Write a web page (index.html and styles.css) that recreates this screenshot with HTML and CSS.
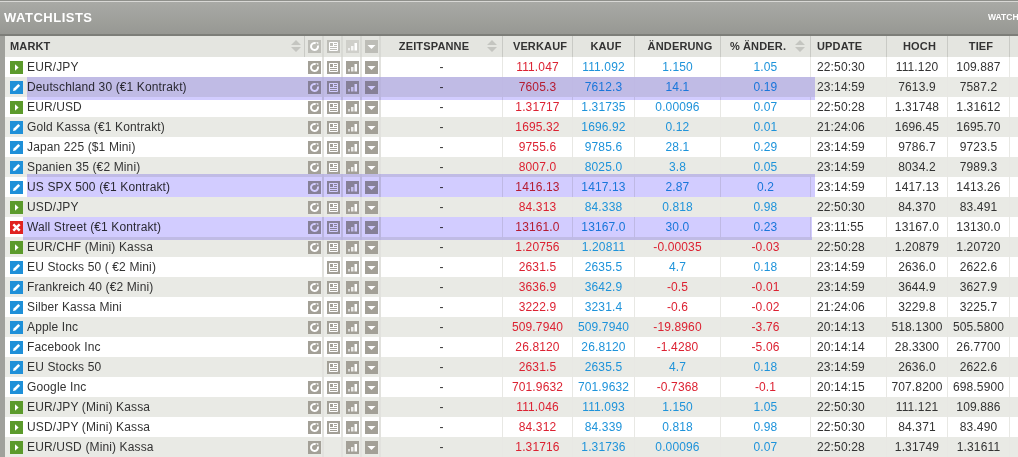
FILE: index.html
```html
<!DOCTYPE html>
<html lang="de">
<head>
<meta charset="utf-8">
<title>Watchlists</title>
<link rel="stylesheet" href="styles.css">
</head>
<body>
<svg class="defs" width="0" height="0" aria-hidden="true">
  <symbol id="i-refresh" viewBox="0 0 13 13"><rect width="13" height="13" fill="currentColor"/><path d="M7.700 3.200A3.500 3.500 0 1 0 9.900 5.600" fill="none" stroke="#fff" stroke-width="2"/><path d="M8 2.200h2.300v2.300z" fill="#fff"/></symbol>
  <symbol id="i-news" viewBox="0 0 13 13"><rect width="13" height="13" fill="currentColor"/><path d="M2.500 2.500h8v8h-8zM2.500 6.500h8M2.500 8.500h8M6.500 2.500v4M7 4.500h3" fill="none" stroke="#fff"/></symbol>
  <symbol id="i-bars" viewBox="0 0 13 13"><rect width="13" height="13" fill="currentColor"/><rect x="2" y="8" width="2" height="2.500" fill="#fff" opacity=".65"/><rect x="5" y="6" width="2.500" height="4.500" fill="#fff" opacity=".8"/><rect x="8.500" y="3" width="2.500" height="7.500" fill="#fff"/></symbol>
  <symbol id="i-menu" viewBox="0 0 13 13"><rect width="13" height="13" fill="currentColor"/><path d="M2.500 5h8l-4 4z" fill="#fff"/></symbol>
  <symbol id="i-play" viewBox="0 0 13 13"><rect width="13" height="13" fill="#5b9a2b"/><path d="M5 3.200v6.600L8.600 6.500z" fill="#fff"/></symbol>
  <symbol id="i-edit" viewBox="0 0 13 13"><rect width="13" height="13" fill="#1f90d8"/><path d="M3 10l.6-2.400 4.700-4.700 1.800 1.800-4.700 4.700z" fill="#fff"/></symbol>
  <symbol id="i-stop" viewBox="0 0 13 13"><rect width="13" height="13" fill="#e0231f"/><path d="M3.300 3.300l6.400 6.400M9.700 3.300l-6.400 6.400" stroke="#fff" stroke-width="2.400"/></symbol>
  <symbol id="i-sort" viewBox="0 0 10 12"><path d="M5 0l5 5H0zM0 7h10l-5 5z" fill="#c4c5c0"/></symbol>
</svg>
<main class="panel">
  <header class="titlebar">
    <h1 class="title">WATCHLISTS</h1>
    <span class="title-tab">WATCH</span>
  </header>
  <div class="board">
    <table class="grid">
      <colgroup>
        <col class="c-market"><col class="c-ic"><col class="c-ic"><col class="c-ic"><col class="c-ic"><col class="c-span"><col class="c-sell"><col class="c-buy"><col class="c-chg"><col class="c-pct"><col class="c-upd"><col class="c-high"><col class="c-low"><col class="c-rest">
      </colgroup>
      <thead>
        <tr>
          <th class="left"><div class="hd">MARKT<svg class="sort"><use href="#i-sort"/></svg></div></th>
          <th class="ic"><svg class="icon"><use href="#i-refresh"/></svg></th>
          <th class="ic"><svg class="icon"><use href="#i-news"/></svg></th>
          <th class="ic"><svg class="icon faint"><use href="#i-bars"/></svg></th>
          <th class="ic"><svg class="icon"><use href="#i-menu"/></svg></th>
          <th><div class="hd center">ZEITSPANNE<svg class="sort"><use href="#i-sort"/></svg></div></th>
          <th class="shift">VERKAUF</th>
          <th class="shift">KAUF</th>
          <th class="shift">ÄNDERUNG</th>
          <th><div class="hd center">% ÄNDER.<svg class="sort"><use href="#i-sort"/></svg></div></th>
          <th class="upd">UPDATE</th>
          <th class="shift">HOCH</th>
          <th class="shift">TIEF</th>
          <th class="rest"></th>
        </tr>
      </thead>
      <tbody>
        <tr><td class="name"><svg class="state"><use href="#i-play"/></svg>EUR/JPY</td><td class="ic"><svg class="icon"><use href="#i-refresh"/></svg></td><td class="ic"><svg class="icon"><use href="#i-news"/></svg></td><td class="ic"><svg class="icon"><use href="#i-bars"/></svg></td><td class="ic"><svg class="icon"><use href="#i-menu"/></svg></td><td>-</td><td class="neg">111.047</td><td class="pos">111.092</td><td class="pos">1.150</td><td class="pos">1.05</td><td class="upd">22:50:30</td><td>111.120</td><td>109.887</td><td class="rest"></td></tr>
        <tr><td class="name"><svg class="state"><use href="#i-edit"/></svg>Deutschland 30 (€1 Kontrakt)</td><td class="ic"><svg class="icon"><use href="#i-refresh"/></svg></td><td class="ic"><svg class="icon"><use href="#i-news"/></svg></td><td class="ic"><svg class="icon"><use href="#i-bars"/></svg></td><td class="ic"><svg class="icon"><use href="#i-menu"/></svg></td><td>-</td><td class="neg">7605.3</td><td class="pos">7612.3</td><td class="pos">14.1</td><td class="pos">0.19</td><td class="upd">23:14:59</td><td>7613.9</td><td>7587.2</td><td class="rest"></td></tr>
        <tr><td class="name"><svg class="state"><use href="#i-play"/></svg>EUR/USD</td><td class="ic"><svg class="icon"><use href="#i-refresh"/></svg></td><td class="ic"><svg class="icon"><use href="#i-news"/></svg></td><td class="ic"><svg class="icon"><use href="#i-bars"/></svg></td><td class="ic"><svg class="icon"><use href="#i-menu"/></svg></td><td>-</td><td class="neg">1.31717</td><td class="pos">1.31735</td><td class="pos">0.00096</td><td class="pos">0.07</td><td class="upd">22:50:28</td><td>1.31748</td><td>1.31612</td><td class="rest"></td></tr>
        <tr><td class="name"><svg class="state"><use href="#i-edit"/></svg>Gold Kassa (€1 Kontrakt)</td><td class="ic"><svg class="icon"><use href="#i-refresh"/></svg></td><td class="ic"><svg class="icon"><use href="#i-news"/></svg></td><td class="ic"><svg class="icon"><use href="#i-bars"/></svg></td><td class="ic"><svg class="icon"><use href="#i-menu"/></svg></td><td>-</td><td class="neg">1695.32</td><td class="pos">1696.92</td><td class="pos">0.12</td><td class="pos">0.01</td><td class="upd">21:24:06</td><td>1696.45</td><td>1695.70</td><td class="rest"></td></tr>
        <tr><td class="name"><svg class="state"><use href="#i-edit"/></svg>Japan 225 ($1 Mini)</td><td class="ic"><svg class="icon"><use href="#i-refresh"/></svg></td><td class="ic"><svg class="icon"><use href="#i-news"/></svg></td><td class="ic"><svg class="icon"><use href="#i-bars"/></svg></td><td class="ic"><svg class="icon"><use href="#i-menu"/></svg></td><td>-</td><td class="neg">9755.6</td><td class="pos">9785.6</td><td class="pos">28.1</td><td class="pos">0.29</td><td class="upd">23:14:59</td><td>9786.7</td><td>9723.5</td><td class="rest"></td></tr>
        <tr><td class="name"><svg class="state"><use href="#i-edit"/></svg>Spanien 35 (€2 Mini)</td><td class="ic"><svg class="icon"><use href="#i-refresh"/></svg></td><td class="ic"><svg class="icon"><use href="#i-news"/></svg></td><td class="ic"><svg class="icon"><use href="#i-bars"/></svg></td><td class="ic"><svg class="icon"><use href="#i-menu"/></svg></td><td>-</td><td class="neg">8007.0</td><td class="pos">8025.0</td><td class="pos">3.8</td><td class="pos">0.05</td><td class="upd">23:14:59</td><td>8034.2</td><td>7989.3</td><td class="rest"></td></tr>
        <tr><td class="name"><svg class="state"><use href="#i-edit"/></svg>US SPX 500 (€1 Kontrakt)</td><td class="ic"><svg class="icon"><use href="#i-refresh"/></svg></td><td class="ic"><svg class="icon"><use href="#i-news"/></svg></td><td class="ic"><svg class="icon"><use href="#i-bars"/></svg></td><td class="ic"><svg class="icon"><use href="#i-menu"/></svg></td><td>-</td><td class="neg">1416.13</td><td class="pos">1417.13</td><td class="pos">2.87</td><td class="pos">0.2</td><td class="upd">23:14:59</td><td>1417.13</td><td>1413.26</td><td class="rest"></td></tr>
        <tr><td class="name"><svg class="state"><use href="#i-play"/></svg>USD/JPY</td><td class="ic"><svg class="icon"><use href="#i-refresh"/></svg></td><td class="ic"><svg class="icon"><use href="#i-news"/></svg></td><td class="ic"><svg class="icon"><use href="#i-bars"/></svg></td><td class="ic"><svg class="icon"><use href="#i-menu"/></svg></td><td>-</td><td class="neg">84.313</td><td class="pos">84.338</td><td class="pos">0.818</td><td class="pos">0.98</td><td class="upd">22:50:30</td><td>84.370</td><td>83.491</td><td class="rest"></td></tr>
        <tr><td class="name"><svg class="state"><use href="#i-stop"/></svg>Wall Street (€1 Kontrakt)</td><td class="ic"><svg class="icon"><use href="#i-refresh"/></svg></td><td class="ic"><svg class="icon"><use href="#i-news"/></svg></td><td class="ic"><svg class="icon"><use href="#i-bars"/></svg></td><td class="ic"><svg class="icon"><use href="#i-menu"/></svg></td><td>-</td><td class="neg">13161.0</td><td class="pos">13167.0</td><td class="pos">30.0</td><td class="pos">0.23</td><td class="upd">23:11:55</td><td>13167.0</td><td>13130.0</td><td class="rest"></td></tr>
        <tr><td class="name"><svg class="state"><use href="#i-play"/></svg>EUR/CHF (Mini) Kassa</td><td class="ic"><svg class="icon"><use href="#i-refresh"/></svg></td><td class="ic"><svg class="icon"><use href="#i-news"/></svg></td><td class="ic"><svg class="icon"><use href="#i-bars"/></svg></td><td class="ic"><svg class="icon"><use href="#i-menu"/></svg></td><td>-</td><td class="neg">1.20756</td><td class="pos">1.20811</td><td class="neg">-0.00035</td><td class="neg">-0.03</td><td class="upd">22:50:28</td><td>1.20879</td><td>1.20720</td><td class="rest"></td></tr>
        <tr><td class="name"><svg class="state"><use href="#i-edit"/></svg>EU Stocks 50 ( €2 Mini)</td><td class="ic"></td><td class="ic"><svg class="icon"><use href="#i-news"/></svg></td><td class="ic"><svg class="icon"><use href="#i-bars"/></svg></td><td class="ic"><svg class="icon"><use href="#i-menu"/></svg></td><td>-</td><td class="neg">2631.5</td><td class="pos">2635.5</td><td class="pos">4.7</td><td class="pos">0.18</td><td class="upd">23:14:59</td><td>2636.0</td><td>2622.6</td><td class="rest"></td></tr>
        <tr><td class="name"><svg class="state"><use href="#i-edit"/></svg>Frankreich 40 (€2 Mini)</td><td class="ic"><svg class="icon"><use href="#i-refresh"/></svg></td><td class="ic"><svg class="icon"><use href="#i-news"/></svg></td><td class="ic"><svg class="icon"><use href="#i-bars"/></svg></td><td class="ic"><svg class="icon"><use href="#i-menu"/></svg></td><td>-</td><td class="neg">3636.9</td><td class="pos">3642.9</td><td class="neg">-0.5</td><td class="neg">-0.01</td><td class="upd">23:14:59</td><td>3644.9</td><td>3627.9</td><td class="rest"></td></tr>
        <tr><td class="name"><svg class="state"><use href="#i-edit"/></svg>Silber Kassa Mini</td><td class="ic"><svg class="icon"><use href="#i-refresh"/></svg></td><td class="ic"><svg class="icon"><use href="#i-news"/></svg></td><td class="ic"><svg class="icon"><use href="#i-bars"/></svg></td><td class="ic"><svg class="icon"><use href="#i-menu"/></svg></td><td>-</td><td class="neg">3222.9</td><td class="pos">3231.4</td><td class="neg">-0.6</td><td class="neg">-0.02</td><td class="upd">21:24:06</td><td>3229.8</td><td>3225.7</td><td class="rest"></td></tr>
        <tr><td class="name"><svg class="state"><use href="#i-edit"/></svg>Apple Inc</td><td class="ic"><svg class="icon"><use href="#i-refresh"/></svg></td><td class="ic"><svg class="icon"><use href="#i-news"/></svg></td><td class="ic"><svg class="icon"><use href="#i-bars"/></svg></td><td class="ic"><svg class="icon"><use href="#i-menu"/></svg></td><td>-</td><td class="neg">509.7940</td><td class="pos">509.7940</td><td class="neg">-19.8960</td><td class="neg">-3.76</td><td class="upd">20:14:13</td><td>518.1300</td><td>505.5800</td><td class="rest"></td></tr>
        <tr><td class="name"><svg class="state"><use href="#i-edit"/></svg>Facebook Inc</td><td class="ic"><svg class="icon"><use href="#i-refresh"/></svg></td><td class="ic"><svg class="icon"><use href="#i-news"/></svg></td><td class="ic"><svg class="icon"><use href="#i-bars"/></svg></td><td class="ic"><svg class="icon"><use href="#i-menu"/></svg></td><td>-</td><td class="neg">26.8120</td><td class="pos">26.8120</td><td class="neg">-1.4280</td><td class="neg">-5.06</td><td class="upd">20:14:14</td><td>28.3300</td><td>26.7700</td><td class="rest"></td></tr>
        <tr><td class="name"><svg class="state"><use href="#i-edit"/></svg>EU Stocks 50</td><td class="ic"></td><td class="ic"><svg class="icon"><use href="#i-news"/></svg></td><td class="ic"><svg class="icon"><use href="#i-bars"/></svg></td><td class="ic"><svg class="icon"><use href="#i-menu"/></svg></td><td>-</td><td class="neg">2631.5</td><td class="pos">2635.5</td><td class="pos">4.7</td><td class="pos">0.18</td><td class="upd">23:14:59</td><td>2636.0</td><td>2622.6</td><td class="rest"></td></tr>
        <tr><td class="name"><svg class="state"><use href="#i-edit"/></svg>Google Inc</td><td class="ic"><svg class="icon"><use href="#i-refresh"/></svg></td><td class="ic"><svg class="icon"><use href="#i-news"/></svg></td><td class="ic"><svg class="icon"><use href="#i-bars"/></svg></td><td class="ic"><svg class="icon"><use href="#i-menu"/></svg></td><td>-</td><td class="neg">701.9632</td><td class="pos">701.9632</td><td class="neg">-0.7368</td><td class="neg">-0.1</td><td class="upd">20:14:15</td><td>707.8200</td><td>698.5900</td><td class="rest"></td></tr>
        <tr><td class="name"><svg class="state"><use href="#i-play"/></svg>EUR/JPY (Mini) Kassa</td><td class="ic"><svg class="icon"><use href="#i-refresh"/></svg></td><td class="ic"><svg class="icon"><use href="#i-news"/></svg></td><td class="ic"><svg class="icon"><use href="#i-bars"/></svg></td><td class="ic"><svg class="icon"><use href="#i-menu"/></svg></td><td>-</td><td class="neg">111.046</td><td class="pos">111.093</td><td class="pos">1.150</td><td class="pos">1.05</td><td class="upd">22:50:30</td><td>111.121</td><td>109.886</td><td class="rest"></td></tr>
        <tr><td class="name"><svg class="state"><use href="#i-play"/></svg>USD/JPY (Mini) Kassa</td><td class="ic"><svg class="icon"><use href="#i-refresh"/></svg></td><td class="ic"><svg class="icon"><use href="#i-news"/></svg></td><td class="ic"><svg class="icon"><use href="#i-bars"/></svg></td><td class="ic"><svg class="icon"><use href="#i-menu"/></svg></td><td>-</td><td class="neg">84.312</td><td class="pos">84.339</td><td class="pos">0.818</td><td class="pos">0.98</td><td class="upd">22:50:30</td><td>84.371</td><td>83.490</td><td class="rest"></td></tr>
        <tr><td class="name"><svg class="state"><use href="#i-play"/></svg>EUR/USD (Mini) Kassa</td><td class="ic"><svg class="icon"><use href="#i-refresh"/></svg></td><td class="ic"></td><td class="ic"><svg class="icon"><use href="#i-bars"/></svg></td><td class="ic"><svg class="icon"><use href="#i-menu"/></svg></td><td>-</td><td class="neg">1.31716</td><td class="pos">1.31736</td><td class="pos">0.00096</td><td class="pos">0.07</td><td class="upd">22:50:28</td><td>1.31749</td><td>1.31611</td><td class="rest"></td></tr>
      </tbody>
    </table>
    <div class="mark mark-a"></div>
    <div class="mark mark-b"></div>
    <div class="mark mark-c"></div>
  </div>
</main>
</body>
</html>
```

FILE: styles.css
```css
html, body {
  margin: 0;
  padding: 0;
  height: 457px;
  overflow: hidden;
  background: #fff;
}

.defs {
  position: absolute;
}

.panel {
  width: 1018px;
  height: 457px;
  overflow: hidden;
  background: #a0a19c;
  font-family: "Liberation Sans", Arial, sans-serif;
  font-size: 12px;
  color: #333;
}

.titlebar {
  box-sizing: border-box;
  height: 36px;
  display: grid;
  grid-template-columns: 988px 1fr;
  align-items: center;
  padding-bottom: 1px;
  overflow: hidden;
  background: linear-gradient(#a9aaa6, #979893);
  border-top: 1px solid #8f908b;
  box-shadow: inset 0 1px 0 #d8d8d5;
  border-bottom: 2px solid #7d7e79;
}

.title {
  margin: 0;
  padding-left: 4px;
  font-size: 13px;
  font-weight: bold;
  color: #fff;
  letter-spacing: 0.5px;
}

.title-tab {
  font-size: 8.5px;
  font-weight: bold;
  color: #fff;
  white-space: nowrap;
}

.board {
  position: relative;
  margin-left: 5px;
  width: 1013px;
  background: #fff;
}

.grid {
  width: 1013px;
  table-layout: fixed;
  border-collapse: separate;
  border-spacing: 0;
}

.c-market { width: 300px; }
.c-ic { width: 19px; }
.c-span { width: 122px; }
.c-sell { width: 70px; }
.c-buy { width: 62px; }
.c-chg { width: 86px; }
.c-pct { width: 90px; }
.c-upd { width: 76px; }
.c-high { width: 61px; }
.c-low { width: 62px; }
.c-rest { width: 8px; }

th {
  box-sizing: border-box;
  height: 21px;
  padding: 0 0 1px;
  background: #e4e5e0;
  border-right: 1px solid #c9cac5;
  font-size: 11px;
  font-weight: bold;
  letter-spacing: 0.15px;
  color: #333;
  text-align: center;
}

th.shift {
  padding-left: 5px;
}

th.ic {
  color: #bdbdb7;
  border-right: 2px solid #d8d9d4;
  padding-bottom: 0;
}

.hd {
  display: flex;
  align-items: center;
  justify-content: space-between;
  padding: 0 3px 0 5px;
}

.hd.center {
  padding-left: 0;
  padding-right: 5px;
}

.hd.center::before {
  content: "";
  width: 0;
}

td {
  box-sizing: border-box;
  height: 20px;
  padding: 0;
  border-right: 1px solid #e8e8e4;
  line-height: 20px;
  letter-spacing: 0.13px;
  text-align: center;
  white-space: nowrap;
  overflow: hidden;
}

tbody tr:nth-child(even) td {
  background: #e9eae5;
}

tbody tr:nth-child(odd) td {
  background: #fff;
}

td.name {
  text-align: left;
  padding-left: 5px;
  border-right-color: transparent;
}

td.ic {
  border-right: 2px solid #e2e2de;
  color: #a3a097;
  line-height: 0;
}

th.left { text-align: left; }
.upd { text-align: left; padding-left: 6px; }
th.upd { padding-left: 6px; }
.rest { border-right: 0; }

.neg { color: #dc2232; }
.pos { color: #1e93da; }

.icon {
  display: inline-block;
  width: 13px;
  height: 13px;
  vertical-align: middle;
  margin-left: 2px;
}

.icon.faint { color: #cfcfca; }

.state {
  display: inline-block;
  width: 13px;
  height: 13px;
  margin-right: 4px;
  vertical-align: -3px;
}

.sort {
  display: block;
  flex: none;
  width: 10px;
  height: 12px;
}

.mark {
  position: absolute;
  background: #d2ccff;
  mix-blend-mode: multiply;
}

.mark-a { left: 22px; top: 41px; width: 788px; height: 23px; }
.mark-b { left: 22px; top: 138px; width: 788px; height: 23px; }
.mark-c { left: 18px; top: 181px; width: 789px; height: 23px; }
```
